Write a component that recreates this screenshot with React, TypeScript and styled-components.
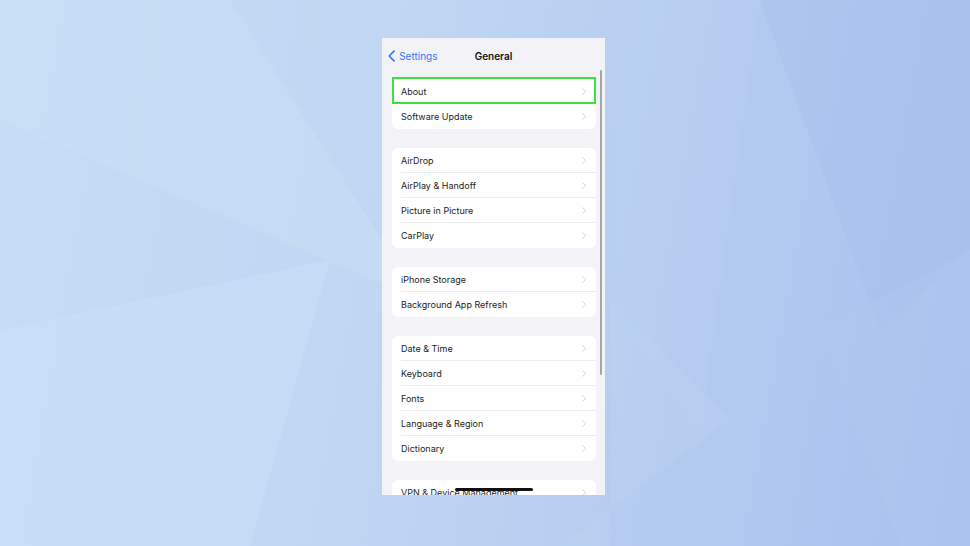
import styled, { createGlobalStyle } from 'styled-components';

const GlobalStyle = createGlobalStyle`
    html, body {
        margin: 0;
        padding: 0;
        width: 100%;
        height: 100%;
        overflow: hidden;
    }
    body {
        font-family: Inter, "Liberation Sans", sans-serif;
    }
`;

const Page = styled.div`
    position: relative;
    width: 970px;
    height: 546px;
    display: flex;
    justify-content: center;
    align-items: flex-start;
    padding: 38px 0 0 17px;
    box-sizing: border-box;
    overflow: hidden;
    background: linear-gradient(100deg, #c6def6 0%, #c0d6f3 40%, #b4cbf0 70%, #a9c0ee 100%);
`;

const Backdrop = styled.svg`
    position: absolute;
    inset: 0;
    width: 100%;
    height: 100%;
`;

const Phone = styled.div`
    position: relative;
    z-index: 1;
    width: 223px;
    height: 457px;
    background: #f2f2f7;
    overflow: hidden;
    display: flex;
    flex-direction: column;
`;

const NavBar = styled.div`
    display: grid;
    grid-template-columns: 1fr auto 1fr;
    align-items: center;
    height: 36px;
    padding: 0 6px;
    flex-shrink: 0;
`;

const BackLink = styled.div`
    display: flex;
    align-items: center;
    gap: 4px;
    color: #3478f6;
    font-size: 10px;
`;

const Title = styled.div`
    font-size: 10px;
    font-weight: 600;
    color: #111;
`;

const Content = styled.div`
    display: flex;
    flex-direction: column;
    gap: 19px;
    padding: 5px 9px 0 10px;
`;

const Group = styled.div`
    background: #fff;
    border-radius: 6px;
`;

const Row = styled.div<{ $highlight?: boolean; $last?: boolean }>`
    position: relative;
    display: flex;
    align-items: center;
    justify-content: space-between;
    height: 25px;
    padding: 0 10px 0 9px;
    font-size: 9px;
    color: #1c1c1e;
    &::after {
        content: '';
        position: absolute;
        left: 9px;
        right: 0;
        bottom: 0;
        height: 1px;
        background: ${p => (p.$last ? 'transparent' : '#ececf0')};
    }
    ${p => p.$highlight && `
        &::before {
            content: '';
            position: absolute;
            left: 0;
            right: 0;
            top: -2px;
            bottom: 0;
            border: 2px solid #3ee23a;
            z-index: 2;
        }
    `}
`;

const Scrollbar = styled.div`
    position: absolute;
    right: 3px;
    top: 32px;
    width: 2px;
    height: 305px;
    border-radius: 1px;
    background: #a5a5aa;
`;

const HomeBar = styled.div`
    position: absolute;
    left: 73px;
    bottom: 4px;
    width: 78px;
    height: 3px;
    border-radius: 2px;
    background: #111;
    z-index: 3;
`;

function Chevron({ color, size, back }: { color: string; size: number; back?: boolean }) {
    return (
        <svg width={size * 0.6} height={size} viewBox="0 0 6 10" fill="none">
            <path
                d={back ? 'M5 1L1 5l4 4' : 'M1 1l4 4-4 4'}
                stroke={color}
                strokeWidth={back ? 1.4 : 1.1}
                strokeLinecap="round"
                strokeLinejoin="round"
            />
        </svg>
    );
}

const groups: string[][] = [
    ['About', 'Software Update'],
    ['AirDrop', 'AirPlay & Handoff', 'Picture in Picture', 'CarPlay'],
    ['iPhone Storage', 'Background App Refresh'],
    ['Date & Time', 'Keyboard', 'Fonts', 'Language & Region', 'Dictionary'],
    ['VPN & Device Management'],
];

function App() {
    return (
        <>
            <GlobalStyle />
            <Page>
                <Backdrop viewBox="0 0 970 546" preserveAspectRatio="none">
                    <polygon points="0,0 230,0 420,300 0,120" fill="#d2e5f9" opacity="0.3" />
                    <polygon points="0,330 330,260 250,546 0,546" fill="#d0e6fb" opacity="0.35" />
                    <polygon points="620,0 760,0 700,430 610,300" fill="#b9cff2" opacity="0.3" />
                    <polygon points="760,0 970,0 970,250 880,330" fill="#a5bcec" opacity="0.35" />
                    <polygon points="820,330 970,250 970,546 900,546" fill="#b3caf0" opacity="0.3" />
                    <polygon points="610,300 730,420 560,546 610,546" fill="#bed3f3" opacity="0.3" />
                </Backdrop>
                <Phone>
                    <NavBar>
                        <BackLink>
                            <Chevron color="#3478f6" size={12} back />
                            Settings
                        </BackLink>
                        <Title>General</Title>
                        <div />
                    </NavBar>
                    <Content>
                        {groups.map((items, gi) => (
                            <Group key={gi}>
                                {items.map((label, i) => (
                                    <Row key={label} $highlight={label === 'About'} $last={i === items.length - 1}>
                                        {label}
                                        <Chevron color="#c4c4c8" size={7} />
                                    </Row>
                                ))}
                            </Group>
                        ))}
                    </Content>
                    <Scrollbar />
                    <HomeBar />
                </Phone>
            </Page>
        </>
    );
}

export default App;
